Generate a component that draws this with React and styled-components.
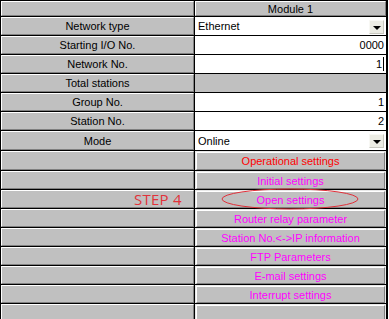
import styled, { createGlobalStyle } from 'styled-components';

const GlobalStyle = createGlobalStyle`
  html, body {
    margin: 0;
    padding: 0;
    background: #ffffff;
  }
  body {
    font-family: "Liberation Sans", Arial, sans-serif;
    font-size: 11px;
  }
`;

const Frame = styled.div`
  position: relative;
  width: 389px;
  height: 319px;
  overflow: hidden;
  background: #ffffff;
`;

const Table = styled.div`
  display: grid;
  grid-template-columns: 193px 191px;
  grid-template-rows: 15px repeat(6, 18px) 19px 19px;
  grid-auto-rows: 18px;
  gap: 1px;
  width: 386px;
  padding: 1px 1px 0 1px;
  background: #000000;
`;

const bevel = `
  background: #c0c0c0;
  border-top: 1px solid #ffffff;
  border-left: 1px solid #ffffff;
  border-bottom: 1px solid #808080;
  border-right: 1px solid #808080;
  box-sizing: border-box;
`;

const HeadCell = styled.div`
  ${bevel}
  display: flex;
  align-items: center;
  justify-content: ${(p) => (p.$right ? 'flex-end' : 'center')};
  padding-right: ${(p) => (p.$right ? '11px' : '0')};
  color: #000000;
  font-size: 11px;
  white-space: nowrap;
`;

const Step = styled.span`
  font-family: "Open Sans", "Liberation Sans", sans-serif;
  font-size: 15px;
  color: #e2323a;
  letter-spacing: 0.3px;
`;

const ValueCell = styled.div`
  background: #ffffff;
  display: flex;
  align-items: center;
  justify-content: ${(p) => (p.$align === 'right' ? 'flex-end' : 'flex-start')};
  padding: 0 2px 0 3px;
  color: #000000;
  font-size: 11px;
`;

const Caret = styled.span`
  display: inline-block;
  width: 1px;
  height: 14px;
  margin-left: 1px;
  background: #000000;
`;

const EmptyCell = styled.div`
  background: #c0c0c0;
`;

const ButtonCell = styled.div`
  background: #e8e8e8;
  padding: 1px 1px 0 1px;
  display: flex;
`;

const SetButton = styled.div`
  ${bevel}
  flex: 1;
  display: flex;
  align-items: center;
  justify-content: center;
  color: ${(p) => (p.$red ? '#ff0000' : '#ff00ff')};
  font-size: 11px;
  white-space: nowrap;
`;

const SelectCell = styled.div`
  background: #ffffff;
  display: flex;
  align-items: center;
  justify-content: space-between;
  padding: 0 2px 0 3px;
  font-size: 11px;
  color: #000000;
`;

const DropButton = styled.div`
  width: 15px;
  height: 14px;
  background: #ecece4;
  border: 1px solid #f8f8f4;
  border-right-color: #c8c8c0;
  border-bottom-color: #c8c8c0;
  box-sizing: border-box;
  display: flex;
  align-items: center;
  justify-content: center;
  margin-top: 1px;

  &::after {
    content: '';
    width: 0;
    height: 0;
    border-left: 4px solid transparent;
    border-right: 4px solid transparent;
    border-top: 4px solid #000000;
    margin-top: 2px;
  }
`;

const Ellipse = styled.svg`
  position: absolute;
  left: 221px;
  top: 188px;
  overflow: visible;
`;

const params = [
  { label: 'Network type', kind: 'select', value: 'Ethernet' },
  { label: 'Starting I/O No.', kind: 'value', value: '0000' },
  { label: 'Network No.', kind: 'value', value: '1', caret: true },
  { label: 'Total stations', kind: 'empty' },
  { label: 'Group No.', kind: 'value', value: '1' },
  { label: 'Station No.', kind: 'value', value: '2' },
  { label: 'Mode', kind: 'select', value: 'Online' },
  { label: '', kind: 'button', value: 'Operational settings', red: true },
  { label: '', kind: 'button', value: 'Initial settings' },
  { label: '', kind: 'button', value: 'Open settings', step: 'STEP 4' },
  { label: '', kind: 'button', value: 'Router relay parameter' },
  { label: '', kind: 'button', value: 'Station No.<->IP information' },
  { label: '', kind: 'button', value: 'FTP Parameters' },
  { label: '', kind: 'button', value: 'E-mail settings' },
  { label: '', kind: 'button', value: 'Interrupt settings' },
  { label: '', kind: 'button', value: '' },
];

const renderValue = (row) => {
  switch (row.kind) {
    case 'select':
      return (
        <SelectCell>
          {row.value}
          <DropButton />
        </SelectCell>
      );
    case 'value':
      return (
        <ValueCell $align='right'>
          {row.value}
          {row.caret && <Caret />}
        </ValueCell>
      );
    case 'button':
      return (
        <ButtonCell>
          <SetButton $red={row.red}>{row.value}</SetButton>
        </ButtonCell>
      );
    default:
      return <EmptyCell />;
  }
};

const App = () => {
  return (
    <>
      <GlobalStyle />
      <Frame>
        <Table>
          <HeadCell />
          <HeadCell>Module 1</HeadCell>
          {params.map((row, i) => [
            <HeadCell key={`l${i}`} $right={!!row.step}>
              {row.step ? <Step>{row.step}</Step> : row.label}
            </HeadCell>,
            <div key={`v${i}`} style={{ display: 'contents' }}>
              {renderValue(row)}
            </div>,
          ])}
        </Table>
        <Ellipse width='138' height='22'>
          <ellipse cx='69' cy='11' rx='68' ry='10' fill='none' stroke='#e0303a' strokeWidth='1' />
        </Ellipse>
      </Frame>
    </>
  );
};

export default App;
